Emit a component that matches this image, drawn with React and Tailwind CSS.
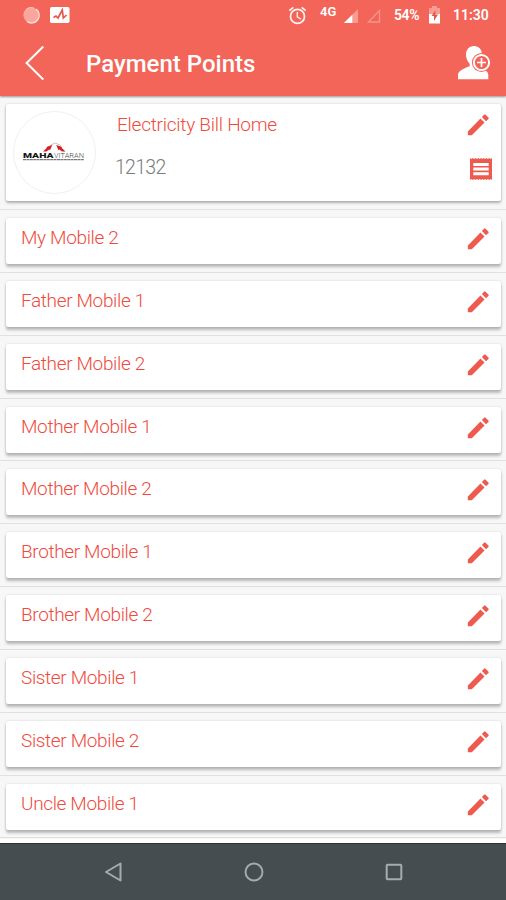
import React from "react";

const rows = [
  "My Mobile 2",
  "Father Mobile 1",
  "Father Mobile 2",
  "Mother Mobile 1",
  "Mother Mobile 2",
  "Brother Mobile 1",
  "Brother Mobile 2",
  "Sister Mobile 1",
  "Sister Mobile 2",
  "Uncle Mobile 1",
];

function Pencil() {
  return (
    <svg viewBox="0 0 24 24" className="size-7 shrink-0 fill-[#ee5a4e]">
      <path d="M3.300 17.600V20.800h3.400L17.600 9.900l-3.500-3.500L3.300 17.600zM20.900 6.900a.9.9 0 0 0 0-1.300l-2.400-2.400a.9.9 0 0 0-1.300 0l-1.900 1.900 3.600 3.600 2-1.800z" />
    </svg>
  );
}

function Receipt() {
  return (
    <svg viewBox="0 0 22 24" className="h-6 w-[22px] shrink-0">
      <path
        fill="#ee5a4e"
        d="M0 1l1.4 1 1.4-1 1.4 1 1.4-1L7 2l1.4-1 1.3 1L11 1l1.3 1 1.3-1L15 2l1.4-1 1.4 1 1.4-1 1.4 1L22 1v22l-1.4-1-1.4 1-1.4-1-1.4 1-1.4-1-1.4 1-1.3-1-1.3 1-1.3-1-1.3 1L7 22l-1.4 1-1.4-1-1.4 1-1.4-1L0 23z"
      />
      <path fill="#fff" d="M3.300 6h15.400v3H3.300zM3.300 10.600h15.400v3H3.300zM3.300 15.200h15.400v3H3.300z" />
    </svg>
  );
}

function StatusBar() {
  return (
    <div className="flex h-8 items-start pl-[22px] text-white">
      <svg viewBox="0 0 48 20" className="mt-[5px] h-5 w-12 shrink-0">
        <circle cx="9" cy="10" r="7.7" fill="#f9a69e" />
        <path d="M14 4a7.7 7.7 0 0 1-9 12.500" fill="none" stroke="#fde0dc" strokeWidth="1.4" />
        <path d="M4 4.500a7.500 7.500 0 0 1 8-1.500" fill="none" stroke="#fbc4be" strokeWidth="1" />
        <rect x="28" y="2" width="19.500" height="16" rx="1.800" fill="#fff" />
        <path d="M31.500 12.500l2.500-1.500 2 2L40.300 5l1 8 3.200-3" fill="none" stroke="#e4574b" strokeWidth="1.700" />
      </svg>
      <svg viewBox="0 0 24 24" className="mt-[4.5px] ml-[217px] size-[21px] shrink-0 fill-[#fff1ef]">
        <path d="m22 5.72-4.600-3.860-1.290 1.530 4.600 3.860L22 5.720zM7.880 3.390 6.600 1.860 2 5.710l1.290 1.530 4.590-3.850zM12.500 8H11v6l4.750 2.850.75-1.230-4-2.370V8zM12 4a9 9 0 1 0 .01 18.010A9 9 0 0 0 12 4zm0 16a7 7 0 1 1 0-14 7 7 0 0 1 0 14z" />
      </svg>
      <span className="mt-[4px] ml-[12px] w-[20px] text-[13px] leading-[15px] font-semibold">4G</span>
      <svg viewBox="0 0 42 18" className="mt-[7px] ml-[3px] h-[18px] w-[42px] shrink-0">
        <path d="M1 16L15 2v14z" fill="#f79c93" />
        <path d="M1 16L9.300 7.700V16z" fill="#fff" />
        <path d="M25.500 15L36.500 3.500V15z" fill="none" stroke="#f8958c" strokeWidth="1.300" />
      </svg>
      <span className="mt-[6px] ml-[9px] w-[27px] text-[14px] leading-[18px] font-semibold tracking-[-0.4px] whitespace-nowrap">
        54%
      </span>
      <svg viewBox="0 0 11 18" className="mt-[6px] ml-[8px] h-[18px] w-[11px] shrink-0">
        <path d="M3 0h5v2h3v6H0V2h3z" fill="#f79c93" />
        <path d="M0 8h11v9.500H0z" fill="#fff" />
        <path d="M6.500 4L2.500 10h2.500v5l4-6.500H6.300z" fill="#e4574b" />
      </svg>
      <span className="mt-[6px] ml-[13px] text-[14px] leading-[18px] font-semibold whitespace-nowrap">11:30</span>
    </div>
  );
}

function AppBar() {
  return (
    <div className="flex h-16 items-start text-white">
      <svg viewBox="0 0 20 36" className="mt-[13px] ml-[25px] h-9 w-5 shrink-0">
        <path d="M18.300 1.500L1.600 18l16.700 16.500" fill="none" stroke="#fff" strokeWidth="2" />
      </svg>
      <h1 className="mt-[18px] ml-[41px] grow text-[24px] leading-[28px] font-medium">Payment Points</h1>
      <svg viewBox="0 0 33 34" className="mt-[14px] mr-[15px] h-[34px] w-[33px] shrink-0">
        <path
          d="M16 0c-5 0-8 3.700-8 8.500 0 4 1.600 7 3.700 9.200v2.500C5.500 22.500 0 25 0 29v4.300h30.300V29c0-2-1-3.400-2.700-4.600L24 8.500C24 3.700 21 0 16 0z"
          fill="#fff"
        />
        <circle cx="23.500" cy="16.500" r="9.600" fill="#f36559" />
        <circle cx="23.500" cy="16.500" r="7.600" fill="none" stroke="#fff" strokeWidth="2" />
        <path d="M23.500 12v9M19 16.500h9" stroke="#fff" strokeWidth="1.700" />
      </svg>
    </div>
  );
}

function Logo() {
  return (
    <div className="mt-[7px] ml-[7px] size-[83px] shrink-0 rounded-full border border-[#f0f0f0] bg-white">
      <svg viewBox="0 0 81 81" className="size-full">
        <path d="M36 33.500L41 31l6 2.500" fill="none" stroke="#c9abab" strokeWidth="0.800" />
        <path d="M29 39.500l4-3.700-.7-.8 6-2-2.300 5.300-.9-.8-2.600 2zM51.500 39.500l-4-3.700.7-.8-6-2 2.300 5.300.9-.8 2.600 2z" fill="#d11f22" />
        <text x="9" y="46" textLength="30.500" lengthAdjust="spacingAndGlyphs" fontSize="7.600" fontWeight="900" fill="#161616">
          MAHA
        </text>
        <text x="40" y="46" textLength="30" lengthAdjust="spacingAndGlyphs" fontSize="7.600" fontWeight="300" fill="#444">
          VITARAN
        </text>
        <path d="M9 47.600h61" stroke="#777" strokeWidth="1.100" strokeDasharray="3 .4" />
      </svg>
    </div>
  );
}

export default function App() {
  return (
    <div className="flex h-[900px] w-[506px] flex-col overflow-hidden bg-white font-[Roboto,sans-serif]">
      <header className="z-10 h-24 shrink-0 bg-[#f36559] shadow-[0_1px_2px_rgba(0,0,0,0.4)]">
        <StatusBar />
        <AppBar />
      </header>

      <main className="flex h-[743px] shrink-0 flex-col bg-[#f7f7f7]">
        <div className="h-[114px] shrink-0 border-b border-[#e2e2e2] pt-2 pr-[5px] pl-1.5">
          <section className="flex h-[97px] rounded-[2px] bg-white shadow-[0_2px_3px_rgba(0,0,0,0.28),0_0_2px_rgba(0,0,0,0.16)]">
            <Logo />
            <div className="ml-[19px] grow font-light">
              <div className="mt-[9px] ml-[2px] text-[19px] leading-[24px] tracking-[-0.25px] text-[#f04a3e]">
                Electricity Bill Home
              </div>
              <div className="mt-[19px] text-[19.500px] leading-[24px] tracking-[-0.7px] text-[#7c7c7c]">12132</div>
            </div>
            <div className="mr-[9px] flex flex-col items-end">
              <div className="mt-[7px]">
                <Pencil />
              </div>
              <div className="mt-[18px]">
                <Receipt />
              </div>
            </div>
          </section>
        </div>

        {rows.map((name) => (
          <div key={name} className="h-[62.85px] shrink-0 border-b border-[#e0e0e0] pt-2 pr-[5px] pl-1.5">
            <section className="flex h-[46px] items-start justify-between rounded-[2px] bg-white pr-[9px] pl-[15px] shadow-[0_3px_3px_rgba(0,0,0,0.25),0_0_2px_rgba(0,0,0,0.16)]">
              <span className="mt-[8px] text-[19px] leading-[24px] font-light tracking-[-0.35px] text-[#f04a3e]">
                {name}
              </span>
              <span className="mt-[7px]">
                <Pencil />
              </span>
            </section>
          </div>
        ))}
      </main>

      <div className="h-1 shrink-0 bg-white" />

      <nav className="flex h-[57px] shrink-0 items-start border-t border-[#2c3438] bg-[#454d51] pl-[104px]">
        <svg viewBox="0 0 20 20" className="mt-[18px] size-5">
          <path d="M2 10L16.500 1.500v17z" fill="none" stroke="#a7abad" strokeWidth="2" strokeLinejoin="round" />
        </svg>
        <svg viewBox="0 0 20 20" className="mt-[18px] ml-[120px] size-5">
          <circle cx="10" cy="10" r="8.500" fill="none" stroke="#a7abad" strokeWidth="1.900" />
        </svg>
        <svg viewBox="0 0 20 20" className="mt-[18px] ml-[120px] size-5">
          <rect x="2.700" y="2.700" width="14.600" height="14.600" rx="0.800" fill="none" stroke="#a7abad" strokeWidth="2" />
        </svg>
      </nav>
    </div>
  );
}
